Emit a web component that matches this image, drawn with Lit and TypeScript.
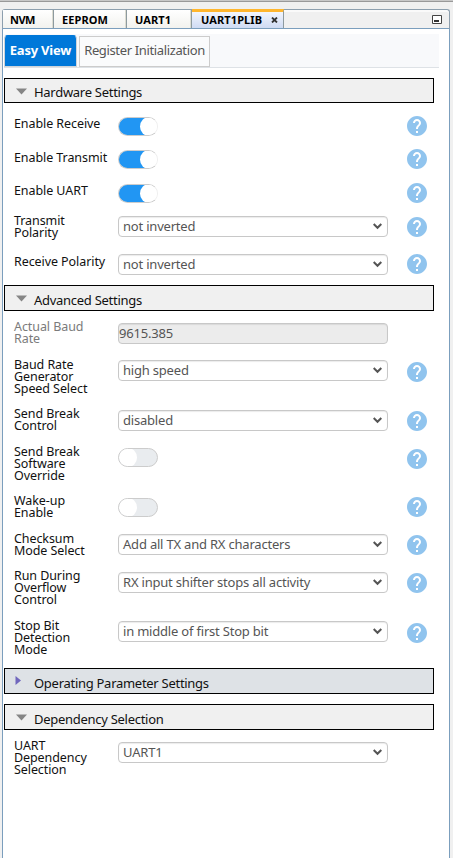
import { LitElement, html, css, svg, nothing } from "lit";
import { customElement, property } from "lit/decorators.js";
import { classMap } from "lit/directives/class-map.js";
import { styleMap } from "lit/directives/style-map.js";

type Kind = "toggle" | "select" | "input";

interface Row {
  label: string;
  kind: Kind;
  value?: string;
  on?: boolean;
  help?: boolean;
  /** row height, label inset, control inset, help inset */
  box: [number, number, number, number];
}

interface Section {
  title: string;
  open: boolean;
  compact?: boolean;
  rows: Row[];
}

const SECTIONS: Section[] = [
  {
    title: "Hardware Settings",
    open: true,
    compact: true,
    rows: [
      { label: "Enable Receive", kind: "toggle", on: true, help: true, box: [43, 15, 14, 13] },
      { label: "Enable Transmit", kind: "toggle", on: true, help: true, box: [34, 6, 4, 3] },
      { label: "Enable UART", kind: "toggle", on: true, help: true, box: [32, 5, 4, 3] },
      { label: "Transmit\nPolarity", kind: "select", value: "not inverted", help: true, box: [38, 3, 4, 5] },
      { label: "Receive Polarity", kind: "select", value: "not inverted", help: true, box: [35, 6, 4, 4] },
    ],
  },
  {
    title: "Advanced Settings",
    open: true,
    rows: [
      { label: "Actual Baud\nRate", kind: "input", value: "9615.385", box: [45, 10, 12, 0] },
      { label: "Baud Rate\nGenerator\nSpeed Select", kind: "select", value: "high speed", help: true, box: [50, 3, 4, 6] },
      { label: "Send Break\nControl", kind: "select", value: "disabled", help: true, box: [38, 2, 4, 5] },
      { label: "Send Break\nSoftware\nOverride", kind: "toggle", help: true, box: [50, 2, 4, 5] },
      { label: "Wake-up\nEnable", kind: "toggle", help: true, box: [36, 1, 4, 3] },
      { label: "Checksum\nMode Select", kind: "select", value: "Add all TX and RX characters", help: true, box: [38, 3, 4, 5] },
      { label: "Run During\nOverflow\nControl", kind: "select", value: "RX input shifter stops all activity", help: true, box: [49, 2, 4, 5] },
      { label: "Stop Bit\nDetection\nMode", kind: "select", value: "in middle of first Stop bit", help: true, box: [51, 3, 4, 6] },
    ],
  },
  { title: "Operating Parameter Settings", open: false, rows: [] },
  {
    title: "Dependency Selection",
    open: true,
    rows: [
      { label: "UART\nDependency\nSelection", kind: "select", value: "UART1", box: [60, 10, 12, 0] },
    ],
  },
];

@customElement("help-icon")
class HelpIcon extends LitElement {
  static styles = css`
    :host { display: block; width: 20px; height: 20px; }
    svg { display: block; }
  `;
  render() {
    return html`<svg width="20" height="20" viewBox="2 2 20 20">
      <path fill="#90c4ee" d="M12 2C6.48 2 2 6.48 2 12s4.480 10 10 10 10-4.480 10-10S17.520 2 12 2zm1 17h-2v-2h2v2zm2.070-7.750l-.9.920C13.450 12.900 13 13.500 13 15h-2v-.5c0-1.100.45-2.100 1.170-2.830l1.240-1.260c.37-.36.590-.86.590-1.410 0-1.100-.9-2-2-2s-2 .9-2 2H8c0-2.210 1.790-4 4-4s4 1.790 4 4c0 .88-.36 1.680-.93 2.250z"/>
    </svg>`;
  }
}

@customElement("setting-row")
class SettingRow extends LitElement {
  @property({ attribute: false }) row!: Row;

  static styles = css`
    :host { display: block; }
    .row {
      display: grid;
      grid-template-columns: 104px 270px 20px;
      column-gap: 0;
      padding-left: 10px;
      box-sizing: border-box;
      align-items: start;
    }
    .label { white-space: pre; font-size: 12.5px; line-height: 12px; letter-spacing: -0.08px; color: #111; }
    .label.disabled { color: #7b7b7b; }
    .toggle {
      width: 40px; height: 19px; box-sizing: border-box;
      border: 1px solid #ccc; border-radius: 10px;
      background: #e9ecef; display: flex; overflow: hidden;
    }
    .toggle.on {
      border-right-color: #eee; justify-content: flex-end;
      background: linear-gradient(90deg, #2196f3 30px, #fff 30px);
    }
    .knob { width: 18px; height: 19px; margin: -1px 0; border-radius: 50%; background: #fff; }
    .toggle.on .knob { margin-right: -1px; }
    .field {
      width: 270px; height: 21px; box-sizing: border-box;
      border: 1px solid #c8c8c8; border-radius: 4px; background: #fff;
      box-shadow: inset 0 1px 1px rgba(0, 0, 0, 0.08);
      display: flex; align-items: center; justify-content: space-between;
      padding: 0 5px 0 4px; font-size: 13px; line-height: 19px; letter-spacing: -0.2px;
      color: #555; white-space: nowrap;
    }
    .field.input { background: #ececec; padding-left: 0; }
    .help { margin-left: 19px; }
  `;

  private control() {
    const r = this.row;
    if (r.kind === "toggle") {
      return html`<div class=${classMap({ toggle: true, on: !!r.on })} role="switch" aria-checked=${r.on ? "true" : "false"}><span class="knob"></span></div>`;
    }
    return html`<div class=${classMap({ field: true, input: r.kind === "input" })}>
      <span>${r.value}</span>
      ${r.kind === "select"
        ? html`<svg width="9" height="7" viewBox="0 0 9 7"><path d="M0.700 1L4.500 4.800L8.300 1" fill="none" stroke="#555" stroke-width="2"/></svg>`
        : nothing}
    </div>`;
  }

  render() {
    const [h, l, c, q] = this.row.box;
    return html`<div class="row" style=${styleMap({ height: `${h}px` })}>
      <div class=${classMap({ label: true, disabled: this.row.kind === "input" })} style=${styleMap({ marginTop: `${l}px` })}>${this.row.label}</div>
      <div style=${styleMap({ marginTop: `${c}px` })}>${this.control()}</div>
      ${this.row.help ? html`<help-icon class="help" style=${styleMap({ marginTop: `${q}px` })}></help-icon>` : nothing}
    </div>`;
  }
}

@customElement("app-root")
class AppRoot extends LitElement {
  static styles = css`
    :host {
      display: block; height: 858px; width: 453px; box-sizing: border-box; overflow: hidden;
      background: #f0f0f0; border-top: 1px solid #c8c8c8;
      font-family: "Noto Sans", "Open Sans", sans-serif;
    }
    .edge { height: 1px; background: #999; margin-bottom: 7px; }
    .window { margin-left: 2px; width: 448px; height: 849px; display: flex; flex-direction: column; }
    .tabs {
      height: 20px; flex: none; display: flex; box-sizing: border-box;
      border: 1px solid #8d9fae; border-bottom: 1px solid #7b9ebd;
      border-radius: 3px 3px 0 0; box-shadow: inset 0 2px #fafafa;
    }
    .tab {
      box-sizing: border-box; height: 18px; padding: 2px 0 0 8px;
      border-right: 1px solid #8d9a9f; display: flex; align-items: center;
      background: linear-gradient(#fff, #f2f2ee); box-shadow: inset -1px 0 #dcdcd2;
      font-size: 11px; font-weight: 700; line-height: 16px; letter-spacing: 0.1px; color: #000; white-space: nowrap;
    }
    .w1 { width: 51px; padding-left: 7px; letter-spacing: -0.5px; } .w2 { width: 73px; } .w3 { width: 65px; }
    .w4 { width: 92px; }
    .active {
      margin-top: -1px; height: 19px; border-top: 3px solid #ffb62e; padding: 0 5px 0 9px;
      background: linear-gradient(#f2f5fd, #cfdbf3); justify-content: space-between; box-shadow: none;
    }
    .min { margin: 5px 7px 0 auto; display: block; }
    .body {
      flex: 1; border: solid #7b9ebd; border-width: 0 1px; background: #fff; padding: 5px 0 0 1px; overflow: hidden;
    }
    .views {
      width: 435px; height: 33px; box-sizing: content-box; background: #f8f9fb;
      border-bottom: 1px solid #dee2e6; display: flex; align-items: flex-end;
    }
    .view { box-sizing: border-box; font-size: 13px; padding-bottom: 2px; display: flex; align-items: center; justify-content: center; white-space: nowrap; }
    .primary {
      width: 73px; height: 32px; background: #0078d9; color: #fff; font-weight: 700; letter-spacing: -0.2px;
      border: 1px solid #ced4da; border-top-color: #0078d9; border-radius: 4px 4px 0 0;
    }
    .secondary { width: 131px; height: 31px; margin-left: 2px; padding-bottom: 3px; letter-spacing: -0.36px; color: #555; border: 1px solid #ccc; background: #fafbfc; }
    .head {
      width: 430px; height: 26px; box-sizing: border-box; border: 1px solid #000; background: #f0f0f0;
      display: flex; align-items: center; padding-left: 11px; font-size: 13px; line-height: 20px; letter-spacing: -0.28px; color: #111;
    }
    .head svg { flex: none; width: 11px; height: 10px; margin-right: 7px; }
    .head span { padding-top: 3px; }
    .head.compact { height: 25px; margin-top: 10px; }
    .head.closed { background: #dee2e6; margin-bottom: 10px; padding-left: 8px; }
    .head.closed svg { margin-right: 10px; }
  `;

  private section(s: Section) {
    return html`<section>
      <div class=${classMap({ head: true, compact: !!s.compact, closed: !s.open })}>
        <svg viewBox="0 0 11 10">${s.open
          ? svg`<path d="M0 2.500H11L5.500 8.500Z" fill="#858585"/>`
          : svg`<path d="M2.500 0L8 4.500L2.500 9Z" fill="#7067bd"/>`}</svg>
        <span>${s.title}</span>
      </div>
      ${s.rows.map((r) => html`<setting-row .row=${r}></setting-row>`)}
    </section>`;
  }

  render() {
    return html`
      <div class="edge"></div>
      <div class="window">
        <nav class="tabs">
          <div class="tab w1"><span>NVM</span></div>
          <div class="tab w2"><span>EEPROM</span></div>
          <div class="tab w3"><span>UART1</span></div>
          <div class="tab w4 active"><span>UART1PLIB</span>
            <svg width="7" height="6" viewBox="0 0 7 6"><path d="M1 .5L6 5.500M6 .5L1 5.500" stroke="#333" stroke-width="1.800"/></svg>
          </div>
          <svg class="min" width="10" height="9" viewBox="0 0 10 9"><path d="M.5 .5H9.500V8.500H.5Z" fill="#fff" stroke="#444"/><path d="M2 5H7V7H2Z" fill="#333"/></svg>
        </nav>
        <main class="body">
          <div class="views">
            <div class="view primary">Easy View</div>
            <div class="view secondary">Register Initialization</div>
          </div>
          ${SECTIONS.map((s) => this.section(s))}
        </main>
      </div>`;
  }
}
